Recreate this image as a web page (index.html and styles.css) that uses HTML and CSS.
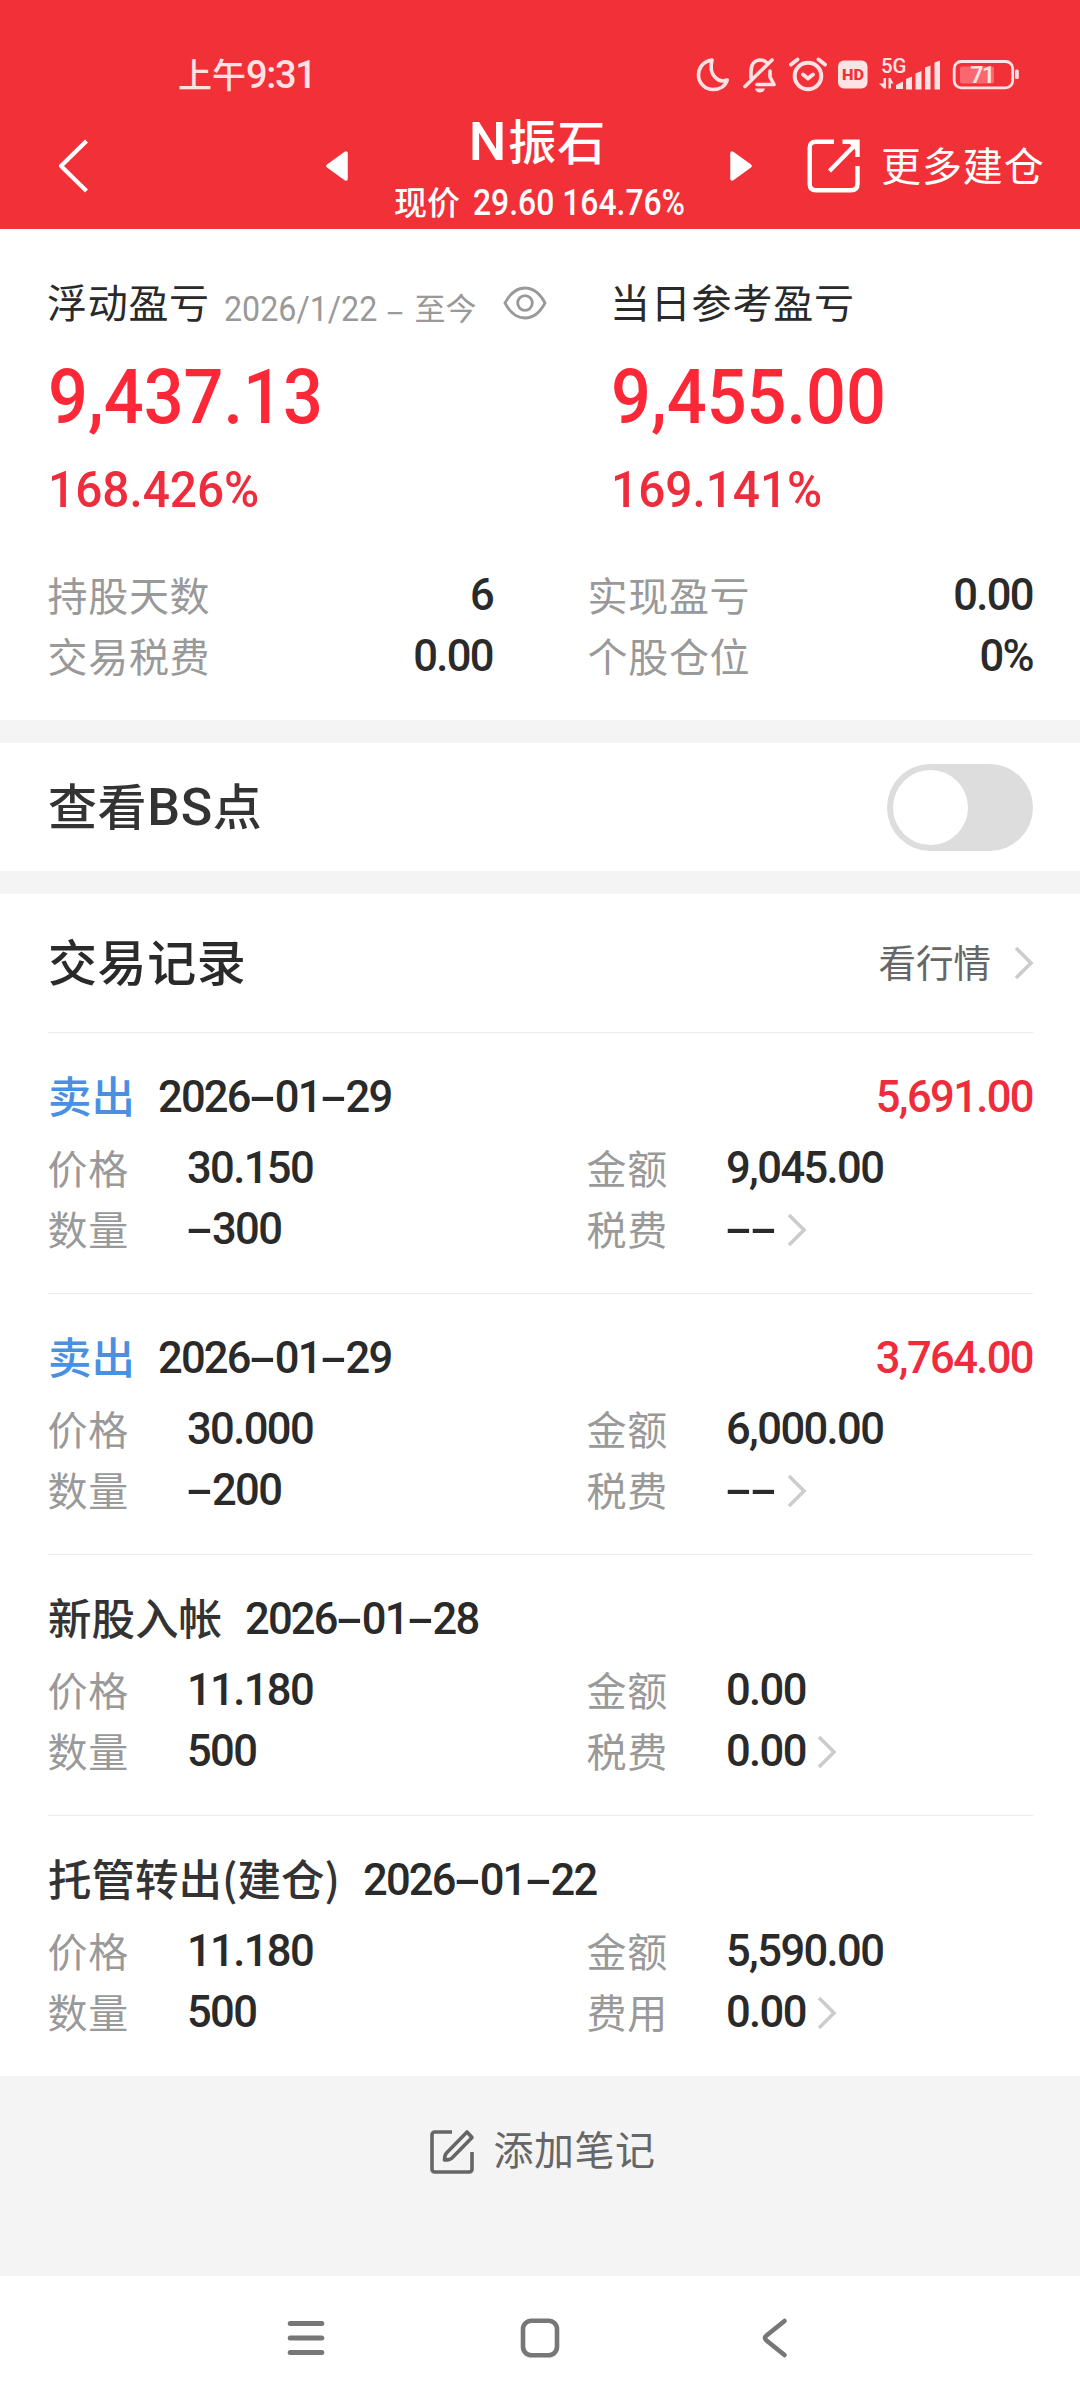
FILE: index.html
```html
<!DOCTYPE html>
<html lang="zh-CN">
<head>
<meta charset="utf-8">
<title>N振石</title>
<link rel="stylesheet" href="styles.css">
</head>
<body>
<div class="screen">
  <header class="header">
    <div class="status">
      <div class="clock"><span>上午</span><span class="clock-num">9:31</span></div>
      <svg class="status-icons" width="330" height="44" viewBox="692 53 330 44" fill="none" stroke="#ffe3e4" stroke-width="3.6" stroke-linecap="round" stroke-linejoin="round">
        <path d="M712 60 C702 61.500 698.500 69 698.500 75 C698.500 83 705 89.500 713 89.500 C720 89.500 725.500 86 727.200 80 C719 83.500 708 76 712 60 Z"/>
        <path d="M751 78 V72 C751 64 755 60 760 60 C763 60 765.500 61 767 63 M770 71 V77 L774 84.500 M757 84.500 L774 84.500 M745 86.500 L772 60"/>
        <path d="M755 88.500 H765 Q764 92.500 760 92.500 Q756 92.500 755 88.500 Z" fill="#ffe3e4" stroke="none"/>
        <circle cx="808" cy="76" r="13.300" stroke-width="4"/>
        <path d="M803 74.500 L808 78.500 L813 74.500 M791 64.500 L797.500 59.500 M825 64.500 L818.500 59.500" stroke-width="4"/>
        <rect x="838" y="60.500" width="29.500" height="28" rx="6" fill="#ffe3e4" stroke="none"/>
        <g stroke="none" fill="#ffe3e4">
          <text class="hd" x="853" y="80" textLength="22" lengthAdjust="spacingAndGlyphs" text-anchor="middle">HD</text>
          <text class="net" x="881" y="73" textLength="25.500" lengthAdjust="spacingAndGlyphs">5G</text>
          <path d="M896 85 L903 81.500 V89 H896 Z M906 79 L912 76.500 V89.500 H906 Z M915.500 73.500 L921.500 71 V89.500 H915.500 Z M925 67.500 L930.500 65.500 V89.500 H925 Z M934.500 62.500 L940 60.500 V89.500 H934.500 Z"/>
          <path d="M883.500 78 H886 V88.500 H884 L879 83.500 H883.500 Z M888.500 78 H890.500 L893.500 83.500 H891 V88.500 H888.500 Z"/>
          <rect x="960" y="66.500" width="34" height="17" rx="2" fill="#f8686e"/>
          <rect x="1015" y="69.500" width="3.800" height="9.500" rx="1.500"/>
          <text class="batt" x="982" y="83" text-anchor="middle">71</text>
        </g>
        <rect x="954.200" y="61.500" width="58.500" height="26.300" rx="7" stroke-width="2.800"/>
      </svg>
    </div>
    <div class="bar">
      <svg class="back" width="34" height="56" viewBox="0 0 34 56" fill="none" stroke="#fff" stroke-width="4.200"><path d="M29.500 3 L4 28 L29.500 53" stroke-linejoin="round"/></svg>
      <svg class="prev" width="24" height="30" viewBox="0 0 24 30"><path d="M21 2 L3 15 L21 28 Z" fill="#fff" stroke="#fff" stroke-width="3.500" stroke-linejoin="round"/></svg>
      <div class="title">
        <h1><span class="n">N</span>振石</h1>
        <p>现价<span class="quote">29.60 164.76%</span></p>
      </div>
      <svg class="next" width="24" height="30" viewBox="0 0 24 30"><path d="M3 2 L21 15 L3 28 Z" fill="#fff" stroke="#fff" stroke-width="3.500" stroke-linejoin="round"/></svg>
      <svg class="share" width="54" height="54" viewBox="0 0 54 54" fill="none" stroke="#fff" stroke-width="4.400">
        <path d="M27 2.700 H9 Q2.700 2.700 2.700 9 V45 Q2.700 51.300 9 51.300 H44 Q50.500 51.300 50.500 45 V27"/>
        <path d="M22.500 32 L48 6 M35.500 2.700 H50.500 V18"/>
        <path d="M42 4 H50 V13 Z" fill="#fff" stroke="none"/>
      </svg>
      <span class="more">更多建仓</span>
    </div>
  </header>

  <section class="summary">
    <div class="profits">
      <div class="profit">
        <div class="head">
          <span>浮动盈亏</span>
          <span class="period"><span class="period-num">2026/1/22</span><span class="minus">-</span><span class="now">至今</span></span>
          <svg class="eye" width="44" height="34" viewBox="0 0 44 34" fill="none" stroke="#999" stroke-width="2.800"><path d="M2 17 Q10 2 22 2 Q34 2 42 17 Q34 32 22 32 Q10 32 2 17 Z"/><circle cx="22" cy="17" r="7.300"/></svg>
        </div>
        <div class="amount">9,437.13</div>
        <div class="rate">168.426%</div>
      </div>
      <div class="profit">
        <div class="head today"><span>当日参考盈亏</span></div>
        <div class="amount">9,455.00</div>
        <div class="rate">169.141%</div>
      </div>
    </div>
    <div class="stats">
      <div class="stat"><span class="label">持股天数</span><span class="num">6</span></div>
      <div class="stat"><span class="label">实现盈亏</span><span class="num">0.00</span></div>
      <div class="stat"><span class="label">交易税费</span><span class="num">0.00</span></div>
      <div class="stat"><span class="label">个股仓位</span><span class="num">0%</span></div>
    </div>
  </section>

  <section class="bs">
    <h2>查看<span class="latin">BS</span>点</h2>
    <div class="toggle"><div class="knob"></div></div>
  </section>

  <section class="records">
    <div class="records-head">
      <h2>交易记录</h2>
      <div class="link"><span>看行情</span><svg class="chev" width="20" height="34" viewBox="0 0 20 34"><path d="M2 2 L17 17 L2 32"/></svg></div>
    </div>

    <article class="record">
      <div class="record-title"><span class="sell">卖出</span><span class="num date">2026<i>-</i>01<i>-</i>29</span><span class="num gain">5,691.00</span></div>
      <div class="grid">
        <span class="label">价格</span><span class="num">30.150</span><span class="label">金额</span><span class="num">9,045.00</span>
        <span class="label">数量</span><span class="num"><i>-</i>300</span><span class="label">税费</span><span class="num"><i>-</i><i>-</i><svg class="chev" width="20" height="34" viewBox="0 0 20 34"><path d="M2 2 L17 17 L2 32"/></svg></span>
      </div>
    </article>

    <article class="record">
      <div class="record-title"><span class="sell">卖出</span><span class="num date">2026<i>-</i>01<i>-</i>29</span><span class="num gain">3,764.00</span></div>
      <div class="grid">
        <span class="label">价格</span><span class="num">30.000</span><span class="label">金额</span><span class="num">6,000.00</span>
        <span class="label">数量</span><span class="num"><i>-</i>200</span><span class="label">税费</span><span class="num"><i>-</i><i>-</i><svg class="chev" width="20" height="34" viewBox="0 0 20 34"><path d="M2 2 L17 17 L2 32"/></svg></span>
      </div>
    </article>

    <article class="record">
      <div class="record-title"><span>新股入帐</span><span class="num date">2026<i>-</i>01<i>-</i>28</span></div>
      <div class="grid">
        <span class="label">价格</span><span class="num">11.180</span><span class="label">金额</span><span class="num">0.00</span>
        <span class="label">数量</span><span class="num">500</span><span class="label">税费</span><span class="num">0.00<svg class="chev" width="20" height="34" viewBox="0 0 20 34"><path d="M2 2 L17 17 L2 32"/></svg></span>
      </div>
    </article>

    <article class="record">
      <div class="record-title"><span>托管转出(建仓)</span><span class="num date">2026<i>-</i>01<i>-</i>22</span></div>
      <div class="grid">
        <span class="label">价格</span><span class="num">11.180</span><span class="label">金额</span><span class="num">5,590.00</span>
        <span class="label">数量</span><span class="num">500</span><span class="label">费用</span><span class="num">0.00<svg class="chev" width="20" height="34" viewBox="0 0 20 34"><path d="M2 2 L17 17 L2 32"/></svg></span>
      </div>
    </article>
  </section>

  <div class="note">
    <svg width="46" height="46" viewBox="0 0 46 46" fill="none" stroke="#666" stroke-width="3.600" stroke-linejoin="round">
      <path d="M23 3 H6 Q3 3 3 6 V40 Q3 43 6 43 H40 Q43 43 43 40 V23" />
      <path d="M38 3 L43 8.500 L23 29 Q21 31 15.500 31 Q15.500 26 17.500 24 Z"/>
    </svg>
    <span>添加笔记</span>
  </div>

  <nav class="nav">
    <svg width="40" height="44" viewBox="0 0 40 44" stroke="#777" stroke-width="5" stroke-linecap="round"><path d="M5.200 7.500 H36.800 M5.200 22 H36.800 M5.200 36.500 H36.800"/></svg>
    <svg width="44" height="44" viewBox="0 0 44 44" fill="none" stroke="#777" stroke-width="4.600"><rect x="5" y="4.700" width="34" height="34.600" rx="8.500"/></svg>
    <svg width="40" height="44" viewBox="0 0 40 44" fill="none" stroke="#777" stroke-width="4.600" stroke-linecap="round" stroke-linejoin="round"><path d="M29.500 5 L11.500 19.500 Q8.500 22 11.500 24.500 L29.500 39"/></svg>
  </nav>
</div>
</body>
</html>
```
FILE: styles.css
```css
* { box-sizing: border-box; margin: 0; padding: 0; }
body {
  background: #fff;
  color: #2a2a2a;
  font-family: "Noto Sans CJK SC", sans-serif;
  font-size: 40px;
}
svg { display: block; flex: none; }
h1, h2 { font-weight: 500; }
.screen { width: 1080px; height: 2400px; display: flex; flex-direction: column; overflow: hidden; white-space: nowrap; }

/* Header */
.header { height: 229px; background: #f23038; color: #fff; padding-top: 53px; }
.status { height: 44px; display: flex; justify-content: space-between; align-items: center; padding: 0 58px 0 178px; }
.clock { display: flex; align-items: center; color: #ffe3e4; font-size: 34px; line-height: 44px; font-weight: 500; }
.clock span:first-child { margin-top: -3px; }
.clock-num { font-family: Roboto, sans-serif; font-size: 38px; letter-spacing: -1.3px; }
.hd { font: 900 15.5px Roboto, sans-serif; fill: #f23038; }
.net { font: 500 20px Roboto, sans-serif; }
.batt { font: 600 23px Roboto, sans-serif; letter-spacing: -1.5px; }
.bar { display: flex; height: 132px; position: relative; padding-left: 57px; }
.back { margin-top: 41px; }
.prev { margin: 54px 0 0 234px; }
.title { width: 380px; display: flex; flex-direction: column; align-items: center; }
.title h1 { display: flex; align-items: center; height: 60px; margin-top: 12px; font-size: 48px; line-height: 60px; letter-spacing: 1px; }
.n { font-family: Roboto, sans-serif; font-size: 53px; font-weight: 500; letter-spacing: 0; margin: 5px 2px 0 -3px; }
.title p { display: flex; align-items: center; height: 40px; margin-top: 12px; font-size: 33px; line-height: 40px; font-weight: 500; align-self: flex-start; margin-left: 45px; }
.quote { font-family: Roboto, sans-serif; font-size: 36px; transform: scaleX(.885); transform-origin: left; margin: 3px -30px 0 13px; }
.next { margin-top: 54px; }
.share { margin: 42px 0 0 54px; }
.more { margin: 34px 0 0 20px; font-size: 40px; line-height: 66px; letter-spacing: .9px; }

/* Profit summary */
.summary { height: 491px; padding: 42px 48px 0; }
.profits { display: grid; grid-template-columns: 563px 1fr; }
.head { display: flex; align-items: center; height: 60px; line-height: 60px; letter-spacing: .7px; margin-left: -1px; }
.today { letter-spacing: .8px; }
.period { display: flex; align-items: center; margin: 15px 0 0 14px; color: #999; font-size: 31px; letter-spacing: 0; }
.period-num { font-family: Roboto, sans-serif; font-size: 35px; transform: scaleX(.92); transform-origin: left; margin: 2px -14px 0 0; }
.minus { width: 38px; text-align: center; transform: scaleX(1.8); }
.now { margin-top: -4px; }
.eye { margin: 3px 0 0 27px; }
.amount { height: 100px; margin-top: 15px; font: 500 76px/102px Roboto, sans-serif; color: #fc2838; transform: scaleX(.925); transform-origin: left; }
.rate { height: 56px; margin-top: 15px; font: 500 50px/58px Roboto, sans-serif; color: #ee2c3c; transform: scaleX(.955); transform-origin: left; }
.stats { display: grid; grid-template-columns: 445px 445px; column-gap: 95px; margin-top: 47px; }
.stat { display: flex; justify-content: space-between; align-items: center; height: 61px; }
.label { color: #999; font-size: 40px; line-height: 61px; letter-spacing: .7px; margin-left: -.5px; }
.num { font-family: Roboto, sans-serif; font-weight: 500; font-size: 43.5px; line-height: 61px; letter-spacing: -1.6px; padding-top: 2px; }
.num i { display: inline-block; width: 25px; text-align: center; font-style: normal; letter-spacing: 0; transform: scaleX(1.9); }

/* BS switch */
.bs { height: 174px; border: solid #f4f4f4; border-width: 23px 0; display: flex; justify-content: space-between; align-items: center; padding: 0 47px 0 48px; }
h2 { font-size: 49px; line-height: 70px; color: #2a2a2a; letter-spacing: .6px; }
.bs h2 { margin-top: -3px; color: #333; }
.latin { font-family: Roboto, sans-serif; font-size: 52px; }
.toggle { width: 146px; height: 87px; border-radius: 44px; background: #ddd; padding: 6px; }
.knob { width: 75px; height: 75px; border-radius: 50%; background: #fff; }

/* Trade records */
.records { padding: 0 47px 0 48px; height: 1182px; }
.records-head { height: 138px; display: flex; justify-content: space-between; align-items: center; }
.records-head h2 { margin-top: -7px; }
.link { display: flex; align-items: center; color: #666; font-size: 37.5px; line-height: 60px; }
.link span { margin-top: -5px; }
.chev { fill: none; stroke: #ccc; stroke-width: 3.6px; }
.link .chev { margin: 0 -1px 0 23px; }
.record { height: 261px; border-top: 1px solid #ebebeb; padding-top: 27px; }
.record-title { display: flex; align-items: center; height: 70px; font-size: 43.5px; line-height: 70px; font-weight: 500; color: #333; }
.sell { color: #4a90e2; }
.date { margin: 2px 0 0 23px; color: #2a2a2a; letter-spacing: -1.8px; }
.gain { margin: 2px 0 0 auto; color: #ee2c3c; }
.grid { display: grid; grid-template-columns: 139px 400px 139px 1fr; margin-top: 7px; grid-auto-rows: 61px; }
.grid .num { display: flex; align-items: center; }
.grid .chev { margin: 1px 0 0 11px; }

/* Note button */
.note { height: 200px; background: #f4f4f4; display: flex; justify-content: center; padding: 53px 0 0 4px; gap: 19px; color: #666; }
.note span { line-height: 60px; margin-top: -11px; letter-spacing: .5px; }

/* System navigation */
.nav { height: 124px; display: flex; justify-content: center; gap: 193px; padding-top: 40px; }
```
